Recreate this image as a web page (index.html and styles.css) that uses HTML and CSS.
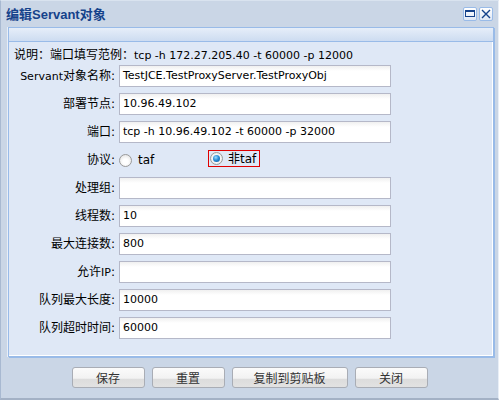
FILE: index.html
```html
<!DOCTYPE html>
<html lang="zh">
<head>
<meta charset="utf-8">
<title>编辑Servant对象</title>
<link rel="stylesheet" href="styles.css">
</head>
<body>
<div class="win">
  <div class="titlebar">
    <span class="title">编辑Servant对象</span>
    <div class="tools">
      <span class="tool"><svg width="12" height="12" viewBox="0 0 12 12"><rect x="1.5" y="2.5" width="9" height="6" fill="none" stroke="#15428b" stroke-width="1"/><rect x="1" y="2" width="10" height="2" fill="#15428b"/></svg></span>
      <span class="tool"><svg width="12" height="12" viewBox="0 0 12 12"><path d="M2 2 L10 10 M10 2 L2 10" stroke="#15428b" stroke-width="1.4" fill="none"/></svg></span>
    </div>
  </div>
  <div class="panel">
    <div class="phead"></div>
    <div class="pbody">
      <div class="note">说明：端口填写范例：<span class="lat">tcp -h 172.27.205.40 -t 60000 -p 12000</span></div>
      <div class="form">
        <label class="lbl"><span class="lat">Servant</span>对象名称:</label><div class="field">TestJCE.TestProxyServer.TestProxyObj</div>
        <label class="lbl">部署节点:</label><div class="field">10.96.49.102</div>
        <label class="lbl">端口:</label><div class="field">tcp -h 10.96.49.102 -t 60000 -p 32000</div>
        <label class="lbl">协议:</label>
        <div class="radios">
          <span class="opt first"><span class="radio"></span><span class="rtext">taf</span></span>
          <span class="opt focus"><span class="radio on"></span><span class="rtext">非taf</span></span>
        </div>
        <label class="lbl">处理组:</label><div class="field"></div>
        <label class="lbl">线程数:</label><div class="field">10</div>
        <label class="lbl">最大连接数:</label><div class="field">800</div>
        <label class="lbl">允许<span class="lat">IP</span>:</label><div class="field"></div>
        <label class="lbl">队列最大长度:</label><div class="field">10000</div>
        <label class="lbl">队列超时时间:</label><div class="field">60000</div>
      </div>
    </div>
  </div>
  <div class="buttons">
    <button class="btn">保存</button>
    <button class="btn">重置</button>
    <button class="btn wide">复制到剪贴板</button>
    <button class="btn">关闭</button>
  </div>
</div>
</body>
</html>
```
FILE: styles.css
```css
html, body {
  margin: 0;
  padding: 0;
}
body {
  width: 499px;
  height: 400px;
  overflow: hidden;
  font-family: "DejaVu Sans", "Noto Sans CJK SC", sans-serif;
  font-size: 12px;
  color: #000;
}
.win {
  box-sizing: border-box;
  width: 499px;
  height: 400px;
  background: #cad6e6;
  border-left: 1px solid #a8b9d1;
  border-top: 1px solid #d9e3ef;
  border-right: 1px solid #e9eff7;
  border-bottom: 2px solid #a3b1c5;
}
.titlebar {
  height: 26px;
  display: flex;
  align-items: center;
  justify-content: space-between;
  padding-left: 5px;
  padding-right: 5px;
}
.title {
  font-family: "Liberation Sans", "Noto Sans CJK SC", sans-serif;
  font-weight: bold;
  font-size: 13px;
  color: #15428b;
  margin-top: -1px;
}
.tools {
  display: flex;
  gap: 2px;
  margin-top: -1px;
}
.tool {
  box-sizing: border-box;
  width: 14px;
  height: 14px;
  border: 1px solid #99bbe8;
  border-radius: 2px;
  background: linear-gradient(#ffffff, #dfe8f6);
  display: flex;
  align-items: center;
  justify-content: center;
}
.tool svg {
  display: block;
}
.panel {
  margin-left: 7px;
  width: 484px;
  border: 1px solid #99bbe8;
  box-shadow: 1px 1px 0 #99bbe8, -1px 0 0 #e8eef7;
}
.phead {
  height: 13px;
  background: linear-gradient(#e6eef9, #cddcf1);
  border-bottom: 1px solid #99bbe8;
}
.pbody {
  height: 314px;
  box-sizing: border-box;
  background: #dfe8f6;
  padding: 5px 0 0 5px;
  box-shadow: inset -1px -1px 0 #ffffff;
}
.note {
  height: 16px;
  line-height: 16px;
  white-space: nowrap;
}
.lat {
  font-size: 11px;
}
.form {
  margin-top: 2px;
  display: grid;
  grid-template-columns: 101px 272px;
  grid-auto-rows: 22px;
  column-gap: 4px;
  row-gap: 6px;
}
.lbl {
  text-align: right;
  line-height: 22px;
  white-space: nowrap;
}
.field {
  box-sizing: border-box;
  height: 22px;
  border: 1px solid #b5b8c8;
  background: linear-gradient(#f0f0f0, #ffffff 5px, #ffffff);
  padding-left: 3px;
  line-height: 20px;
  font-size: 11px;
  white-space: nowrap;
  overflow: hidden;
}
.radios {
  display: flex;
  align-items: center;
}
.opt {
  display: flex;
  align-items: center;
}
.opt.first {
  width: 89px;
}
.opt.focus {
  box-sizing: border-box;
  height: 17px;
  border: 1px solid #e00000;
  padding: 0 3px 0 1px;
  margin-top: -3px;
}
.radio {
  box-sizing: border-box;
  width: 13px;
  height: 13px;
  border-radius: 50%;
  border: 1px solid #9a9a9a;
  background: radial-gradient(circle at 50% 60%, #ffffff 30%, #dcdcdc 100%);
  margin-right: 6px;
  position: relative;
}
.radio.on {
  background: radial-gradient(circle at 50% 50%, #ffffff 40%, #d8d8d8 100%);
  margin-right: 5px;
}
.radio.on::after {
  content: "";
  position: absolute;
  left: 2px;
  top: 2px;
  width: 7px;
  height: 7px;
  border-radius: 50%;
  background: radial-gradient(circle at 40% 35%, #9fdcff 0%, #2b8fd6 45%, #0b4f92 100%);
}
.rtext {
  line-height: 14px;
}
.buttons {
  display: flex;
  justify-content: center;
  gap: 7px;
  padding-top: 10px;
}
.btn {
  box-sizing: border-box;
  width: 73px;
  height: 21px;
  padding: 0;
  border: 1px solid #a9adb5;
  border-radius: 3px;
  background: linear-gradient(#fbfbfb, #f2f2f2 55%, #dcdcdc 56%, #e2e2e2);
  font-family: "Noto Sans CJK SC", "DejaVu Sans", sans-serif;
  font-size: 12px;
  color: #333;
  line-height: 19px;
}
.btn.wide {
  width: 116px;
}
```
